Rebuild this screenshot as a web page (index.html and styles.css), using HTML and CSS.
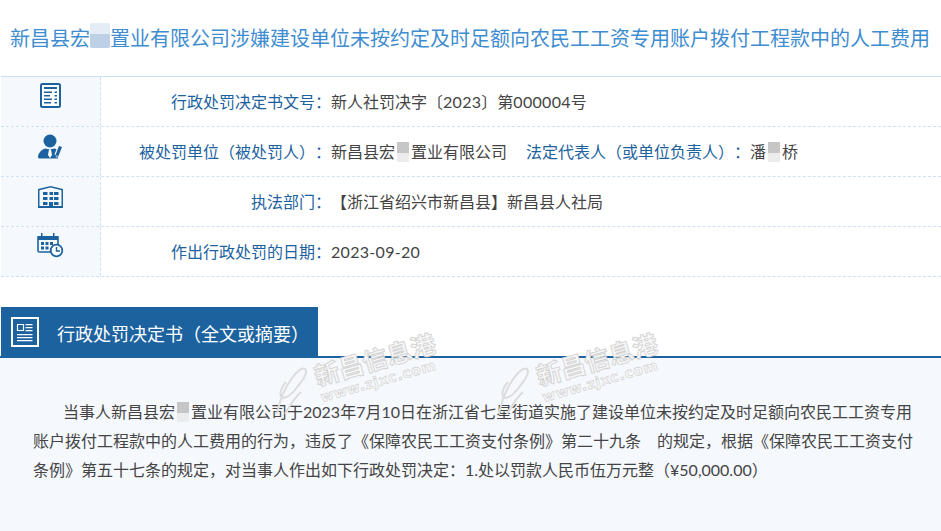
FILE: index.html
```html
<!DOCTYPE html>
<html lang="zh-CN">
<head>
<meta charset="utf-8">
<title>行政处罚决定书</title>
<link rel="stylesheet" href="styles.css">
</head>
<body>
<h1 class="title">新昌县宏<span class="mask mask-blue"></span>置业有限公司涉嫌建设单位未按约定及时足额向农民工工资专用账户拨付工程款中的人工费用</h1>
<div class="table">
  <div class="row">
    <div class="icon-cell icon-doc">
      <svg width="21" height="25" viewBox="0 0 21 25"><rect x="1" y="1" width="19" height="23" rx="1.5" fill="#fff" stroke="#1c629f" stroke-width="2"/><path d="M4 4h13v2H4zM4 8.500h8v1.500H4zM14.500 8.500H17v1.500h-2.500zM4 12h6v1.500H4zM14.500 12H17v1.500h-2.500zM4 15.500h8V17H4zM14.500 15.500H17V17h-2.500zM4 19h7v1.500H4zM14.500 19H17v1.500h-2.500z" fill="#1c629f"/></svg>
    </div>
    <div class="label">行政处罚决定书文号：</div>
    <div class="value">新人社罚决字〔<span class="num">2023</span>〕第<span class="num">000004</span>号</div>
  </div>
  <div class="row">
    <div class="icon-cell icon-person">
      <svg width="25" height="25" viewBox="0 0 25 25"><circle cx="12" cy="7" r="6.500" fill="#1c629f"/><path d="M0 23.500c0-4 3-8 7.500-9l4.500 1 4.500-1c2 .5 3 1.200 3.500 2.500v7.500H3c-2 0-3-.2-3-1z" fill="#1c629f"/><path d="M11 15.500h2l1 5.500-2 3-2-3z" fill="#fff"/><path d="M22.500 12.500l-3.500 9" fill="none" stroke="#f5f9fe" stroke-width="5.500"/><path d="M22.500 12.500l-3.500 9" fill="none" stroke="#1c629f" stroke-width="3.200"/><path d="M17.500 21l3 1.200-2.500 2.300z" fill="#7ea6cb"/></svg>
    </div>
    <div class="label">被处罚单位（被处罚人）：</div>
    <div class="value">新昌县宏<span class="mask mask-grey"></span>置业有限公司<span class="rep">法定代表人（或单位负责人）：</span>潘<span class="mask mask-grey"></span>桥</div>
  </div>
  <div class="row">
    <div class="icon-cell icon-building">
      <svg width="25" height="22" viewBox="0 0 25 22"><path d="M0 22V3L12.500 0 25 3v19z" fill="#1c629f"/><path d="M1.500 4.200l11-2.600 11 2.600V20h-22z" fill="#f5f9fe"/><path d="M5 6h4.500v3H5zM11.500 6H15v3h-3.500zM16 6h4.500v3H16zM5 11h4.500v3H5zM11.500 11H15v3h-3.500zM16 11h4.500v3H16zM5 16h4.500v3H5zM11 16h4v6h-4zM16 16h4.500v3H16z" fill="#1c629f"/></svg>
    </div>
    <div class="label">执法部门：</div>
    <div class="value">【浙江省绍兴市新昌县】新昌县人社局</div>
  </div>
  <div class="row">
    <div class="icon-cell icon-cal">
      <svg width="27" height="26" viewBox="0 0 27 26"><path d="M1 5h20v11h-3a7 7 0 0 0-5 4H2.500C1.500 20 1 19.500 1 18.500z" fill="#f5f9fe" stroke="#1c629f" stroke-width="1.600"/><path d="M1 4h20v4H1z" fill="#1c629f"/><path d="M4 1h1.500v5H4zM16 1h1.500v5H16z" fill="#1c629f"/><path d="M4 10h3v3H4zM8.500 10h3v3h-3zM13 10h3v3h-3zM4 14.500h3v3H4zM8.500 14.500h3v3h-3z" fill="#1c629f"/><circle cx="19.500" cy="18.500" r="5.800" fill="#fff" stroke="#1c629f" stroke-width="1.800"/><path d="M19.500 15v4h3.500" fill="none" stroke="#1c629f" stroke-width="1.500"/></svg>
    </div>
    <div class="label">作出行政处罚的日期：</div>
    <div class="value num">2023-09-20</div>
  </div>
</div>
<div class="section-head">
  <div class="tab">
    <svg width="28" height="30" viewBox="0 0 28 30"><rect x="1" y="1" width="26" height="28" fill="none" stroke="#fff" stroke-width="2"/><path d="M6.500 7.500h6v6h-6z" fill="none" stroke="#fff" stroke-width="1.200"/><path d="M14.500 7h7v1.300h-7zM14.500 10h7v1.300h-7zM14.500 13h7v1.300h-7zM6 17h15.500v1.300H6zM6 20h15.500v1.300H6zM6 23h15.500v1.300H6z" fill="#fff"/></svg>
    <span class="tab-text">行政处罚决定书（全文或摘要）</span>
  </div>
</div>
<div class="content">
  <p class="para">当事人新昌县宏<span class="mask mask-grey"></span>置业有限公司于2023年7月10日在浙江省七星街道实施了建设单位未按约定及时足额向农民工工资专用账户拨付工程款中的人工费用的行为，违反了《保障农民工工资支付条例》第二十九条　的规定，根据《保障农民工工资支付条例》第五十七条的规定，对当事人作出如下行政处罚决定：1.处以罚款人民币伍万元整（¥50,000.00）</p>
</div>
<div class="marks">
  <div class="mark mark-a"><svg class="swirl" width="36" height="50" viewBox="0 0 36 50"><path d="M2 49C4 38 9 24 17 13c4-6 10-11 13-9 3 3-2 11-7 17-5 7-11 12-15 12-5-2-2-11 3-16M10 49C14 42 19 33 26 27" fill="none" stroke="#dcdcdc" stroke-width="2"/></svg><div class="mark-text"><span class="mark-cn">新昌信息港</span><span class="mark-url">www.zjxc.com</span></div></div>
  <div class="mark mark-b"><svg class="swirl" width="36" height="50" viewBox="0 0 36 50"><path d="M2 49C4 38 9 24 17 13c4-6 10-11 13-9 3 3-2 11-7 17-5 7-11 12-15 12-5-2-2-11 3-16M10 49C14 42 19 33 26 27" fill="none" stroke="#dcdcdc" stroke-width="2"/></svg><div class="mark-text"><span class="mark-cn">新昌信息港</span><span class="mark-url">www.zjxc.com</span></div></div>
</div>
</body>
</html>
```
FILE: styles.css
```css
* { box-sizing: border-box; }
html, body { margin: 0; padding: 0; }
body {
  position: relative;
  width: 941px;
  height: 531px;
  overflow: hidden;
  background: #fff;
  font-family: "Lato", "Noto Sans CJK SC", "Noto Sans", sans-serif;
  font-size: 16px;
  color: #444;
  text-spacing-trim: space-all;
}
.title {
  margin: 0;
  height: 76px;
  padding: 0 0 0 10px;
  font-size: 20px;
  font-weight: 400;
  line-height: 76px;
  color: #3f8dd1;
  white-space: nowrap;
}
.mask { display: inline-block; width: 1em; height: 1.25em; text-indent: 0; }
.mask-blue {
  vertical-align: -0.1em;
  background: linear-gradient(#e4ecf5 0 45%, #bdd0e6 45% 100%);
  border-radius: 2px;
}
.mask-grey {
  vertical-align: -0.28em;
  padding: 0 2px;
  background: linear-gradient(#c6c6c6 0 55%, #ececec 55% 100%) content-box;
}
.table { margin-left: 1px; border-top: 1px solid #c5e0f5; }
.row {
  display: flex;
  height: 50px;
  border-bottom: 1px dashed #cfe2f5;
}
.icon-cell {
  flex: 0 0 100px;
  display: flex;
  justify-content: center;
  align-items: flex-start;
  background: #f5f9fe;
  border-right: 1px dashed #cfe2f5;
}
.icon-doc { padding-top: 6px; }
.icon-person { padding-top: 7px; }
.icon-building { padding-top: 9px; }
.icon-cal { padding-top: 5px; }
.label {
  flex: 0 0 230px;
  padding-top: 13px;
  line-height: 24px;
  text-align: right;
  color: #1c629f;
}
.value { padding-top: 13px; line-height: 24px; white-space: nowrap; }
.num { letter-spacing: .3px; }
.rep { margin-left: 19px; color: #1c629f; }
.section-head {
  margin-top: 30px;
  height: 51px;
  border-bottom: 2px solid #1c629f;
}
.tab {
  display: flex;
  align-items: center;
  gap: 18px;
  width: 317px;
  height: 49px;
  margin-left: 1px;
  padding-left: 10px;
  background: #1c629f;
  color: #fff;
}
.tab-text { font-size: 18px; padding-top: 3px; }
.content {
  height: 173px;
  padding: 39px 28px 0 33px;
  background: #f5f8fd;
}
.para {
  margin: 0;
  line-height: 29px;
  text-indent: 30px;
}
.marks { position: absolute; inset: 0; pointer-events: none; }
.mark {
  position: absolute;
  display: flex;
  align-items: flex-start;
  top: 340px;
}
.mark-a { left: 275px; }
.mark-b { left: 497px; }
.swirl { flex: none; margin-top: 25px; }
.mark-text {
  display: flex;
  flex-direction: column;
  margin-left: 6px;
  margin-top: 22px;
  transform: rotate(-16deg);
  transform-origin: left center;
}
.mark-cn {
  font-size: 25px;
  line-height: 28px;
  font-weight: 700;
  color: #f9f9f9;
  -webkit-text-stroke: 1px #d5d5d5;
  white-space: nowrap;
}
.mark-url {
  font-family: "DejaVu Sans", sans-serif;
  font-size: 14px;
  line-height: 17px;
  font-weight: 700;
  letter-spacing: .7px;
  color: #f9f9f9;
  -webkit-text-stroke: .6px #cfcfcf;
  white-space: nowrap;
}
```
